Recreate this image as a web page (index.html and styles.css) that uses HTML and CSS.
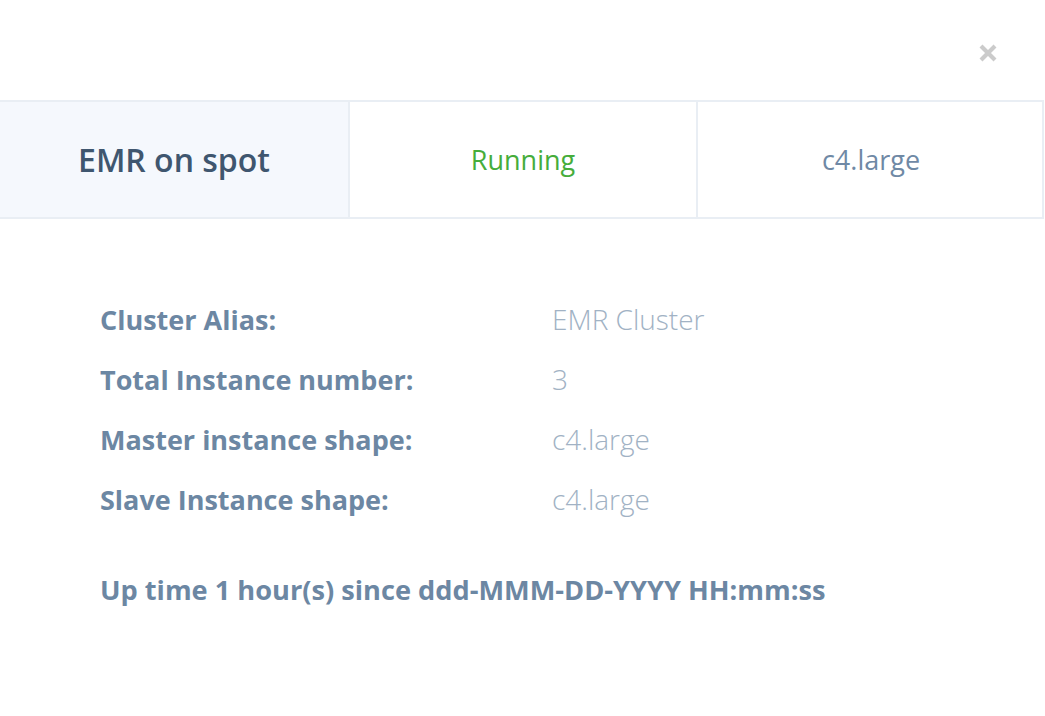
FILE: index.html
```html
<!DOCTYPE html>
<html>
<head>
<meta charset="utf-8">
<link rel="stylesheet" href="styles.css">
</head>
<body>
<div class="modal">
  <div class="modal-head">
    <button class="close" aria-label="Close">
      <svg width="20" height="20" viewBox="0 0 20 20"><path d="M3 3 L17 17 M17 3 L3 17" stroke="#cbcbcb" stroke-width="4.2" stroke-linecap="butt"/></svg>
    </button>
  </div>
  <div class="summary">
    <div class="cell cell-name">EMR on spot</div>
    <div class="cell cell-status">Running</div>
    <div class="cell cell-shape">c4.large</div>
  </div>
  <div class="details">
    <div class="row"><span class="label">Cluster Alias:</span><span class="value">EMR Cluster</span></div>
    <div class="row"><span class="label">Total Instance number:</span><span class="value">3</span></div>
    <div class="row"><span class="label">Master instance shape:</span><span class="value">c4.large</span></div>
    <div class="row"><span class="label">Slave Instance shape:</span><span class="value">c4.large</span></div>
    <div class="uptime">Up time 1 hour(s) since ddd-MMM-DD-YYYY HH:mm:ss</div>
  </div>
</div>
</body>
</html>
```
FILE: styles.css
```css
* { box-sizing: border-box; }
html, body { margin: 0; padding: 0; background: #fff; }
body { font-family: "Open Sans", "Noto Sans", sans-serif; width: 1045px; height: 716px; overflow: hidden; }
.modal { width: 1045px; }
.modal-head { height: 100px; display: flex; justify-content: flex-end; align-items: flex-start; padding: 43px 47px 0 0; }
.close { background: none; border: 0; padding: 0; width: 20px; height: 20px; display: block; cursor: pointer; }
.close svg { display: block; }
.summary { display: grid; grid-template-columns: 348px 348px 348px; height: 119px; border-top: 2px solid #e9eef4; border-bottom: 2px solid #e9eef4; border-right: 2px solid #e9eef4; width: 1044px; }
.cell { display: flex; align-items: center; justify-content: center; padding-top: 0; }
.cell + .cell { border-left: 2px solid #e9eef4; }
.cell-name { background: #f5f8fd; color: #3f566f; font-weight: 600; font-size: 32px; }
.cell-status { color: #46ad3b; font-size: 27px; }
.cell-shape { color: #6f89a5; font-size: 27px; }
.details { padding: 70px 0 0 100px; }
.row { display: flex; height: 60px; align-items: center; }
.label { width: 452px; color: #6c87a3; font-weight: 700; font-size: 27px; }
.value { color: #a1b2c4; font-size: 28px; font-weight: 300; }
.uptime { margin-top: 42px; color: #6c87a3; font-weight: 700; font-size: 27.2px; }
```
